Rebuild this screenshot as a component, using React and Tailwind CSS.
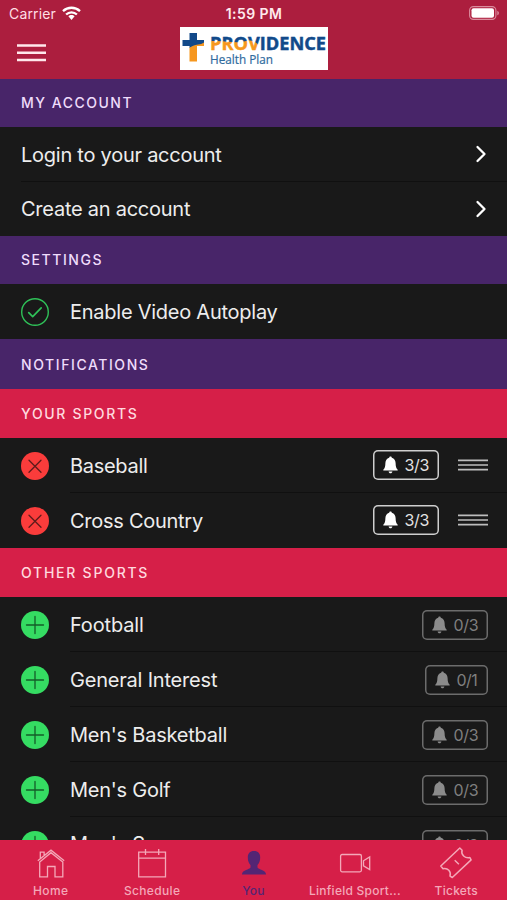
const label = "font-[Inter,sans-serif]";

function Section({ title, tone }) {
  return (
    <div className={`flex shrink-0 items-center pl-[21px] text-[14px] font-medium ${tone}`}>
      <span className="whitespace-nowrap">{title}</span>
    </div>
  );
}

function Chevron() {
  return (
    <svg className="mr-[-1px]" width="14" height="20" viewBox="0 0 14 20" fill="none" stroke="#fff" strokeWidth="2.3" strokeLinecap="round" strokeLinejoin="round">
      <path d="M2.5 3 9.5 10 2.5 17" />
    </svg>
  );
}

function Mark({ kind }) {
  return (
    <svg className="shrink-0" width="28" height="28" viewBox="0 0 28 28" fill="none" strokeLinecap="round" strokeLinejoin="round">
      {kind === "check" && (
        <g stroke="#2fc158" strokeWidth="1.4">
          <circle cx="14" cy="14" r="13.3" />
          <path d="m7.7 14.6 4 4L20.2 9.8" strokeWidth="1.7" />
        </g>
      )}
      {kind === "remove" && (
        <>
          <circle cx="14" cy="14" r="14" fill="#fa3c3b" />
          <path d="m8 8.2 12 12M20 8.2l-12 12" stroke="#5d1b1b" strokeWidth="1.3" />
        </>
      )}
      {kind === "add" && (
        <>
          <circle cx="14" cy="14" r="14" fill="#35dc62" />
          <path d="M14 5.5v17M5.5 14h17" stroke="#145c29" strokeWidth="1.3" />
        </>
      )}
    </svg>
  );
}

function Badge({ count, dim }) {
  const narrow = count === "0/1";
  return (
    <div
      className={`flex h-[30px] shrink-0 items-center rounded-[5px] pl-[9.5px] ${narrow ? "w-[63px]" : "w-[66px]"} ${
        dim ? "mt-px text-[#7f7f7f] shadow-[inset_0_0_0_1.5px_#6c6c6c]" : "mb-px text-[#e2e2e2] shadow-[inset_0_0_0_1.5px_#cfcfcf]"
      }`}
    >
      <svg width="15" height="18" viewBox="0 0 15 18" fill={dim ? "#8b8b8b" : "#fff"}>
        <path d="M7.500.500c.8 0 1.200.500 1.300 1.200C11.300 2.300 12.500 4.400 12.600 7c.1 3.400.400 5.300 2.100 6.700v.9H.3v-.9C2 12.300 2.300 10.400 2.400 7c.1-2.600 1.300-4.700 3.800-5.300C6.300 1 6.700.500 7.500.500ZM5.600 15.400h3.800c-.2 1.100-.9 1.800-1.900 1.800s-1.700-.7-1.900-1.800Z" />
      </svg>
      <span className={`whitespace-nowrap pl-[7px] text-[16px] leading-none ${narrow ? "tracking-[-0.5px]" : "tracking-[-0.35px]"}`}>{count}</span>
    </div>
  );
}

function Row({ mark, text, spacing, children, divider = true, lift = "pt-[2px]" }) {
  return (
    <div className="flex h-[55px] shrink-0 pl-[21px]">
      {mark && (
        <div className="flex w-[49px] shrink-0 items-center">
          <Mark kind={mark} />
        </div>
      )}
      <div className={`flex flex-1 items-center border-b pr-[19px] ${divider ? "border-[#101010]" : "border-transparent"}`}>
        <span className={`flex-1 whitespace-nowrap text-[20px] leading-none text-[#ededed] ${lift} ${spacing}`}>{text}</span>
        {children}
      </div>
    </div>
  );
}

function Handle() {
  return (
    <svg className="ml-[19px]" width="30" height="14" viewBox="0 0 30 14" stroke="#bdbdbd" strokeWidth="1.700">
      <path d="M0 2.400h30M0 7h30M0 11.600h30" />
    </svg>
  );
}

function Logo() {
  return (
    <svg width="148" height="43" viewBox="180 27 148 43">
      <defs>
        <pattern id="wave" patternUnits="userSpaceOnUse" x="180" y="27" width="148" height="43">
          <rect width="148" height="43" fill="#124989" />
          <path d="M0 14.300H30C46 13 54 17 64 14.500 71 12 76 14 79 19L77 25V43H0Z" fill="#f6971f" />
        </pattern>
      </defs>
      <rect x="180" y="27" width="148" height="43" fill="#fff" />
      <path d="M189.500 33h7.500v7h7v3c-2 2-5 3-8 3l-6.500 2v-2h-7v-6h7Z" fill="#124989" />
      <path d="M189.500 48c2-2 5-3 8.500-3.500 3-.4 5-1.200 6-2v3.500h-7v15.500h-7.500Z" fill="#f6971f" />
      <text x="210" y="50.300" fontFamily="Open Sans" fontWeight="700" fontSize="17" textLength="116" lengthAdjust="spacingAndGlyphs" fill="url(#wave)" stroke="url(#wave)" strokeWidth=".4">PROVIDENCE</text>
      <text x="210" y="64.200" fontFamily="Open Sans" fontSize="12.500" textLength="63" lengthAdjust="spacingAndGlyphs" fill="#306b9e" stroke="#306b9e" strokeWidth=".2">Health Plan</text>
    </svg>
  );
}

function Tab({ text, spacing, active, children }) {
  return (
    <div className={`flex flex-1 flex-col items-center pt-[6px] ${active ? "text-[#542574]" : "text-[#f4a8b8]"}`}>
      <svg width="36" height="34" viewBox="0 0 36 34" fill="none" stroke="currentColor" strokeWidth="1.300" strokeLinejoin="miter">
        {children}
      </svg>
      <span className={`mt-[4px] whitespace-nowrap text-[12px] font-medium leading-[14px] ${spacing}`}>{text}</span>
    </div>
  );
}

export default function App() {
  return (
    <div className={`flex h-[900px] w-[507px] flex-col overflow-hidden bg-[#191919] ${label}`}>
      <header className="flex h-[79px] shrink-0 flex-col bg-[#ac1e3e]">
        <div className="grid h-[27px] shrink-0 grid-cols-3 items-center px-[9px] text-white">
          <div className="flex items-center gap-[6px] text-[#ffdfe4]">
            <span className="text-[14px] leading-none tracking-[0.15px]">Carrier</span>
            <svg className="mb-px" width="19" height="15" viewBox="0 0 19 15" fill="none" stroke="#fff" strokeWidth="2.300">
              <path d="M1 5.200c4.800-4.600 12.200-4.600 17 0M4.100 8.500c3-2.900 7.800-2.900 10.800 0" />
              <path d="M9.500 9c1.200 0 2.300.5 3.100 1.300L9.500 14l-3.100-3.700C7.200 9.500 8.300 9 9.500 9Z" fill="#fff" stroke="none" />
            </svg>
          </div>
          <span className="pl-px text-center text-[14px] font-semibold leading-none tracking-[0.4px] text-[#ffeaed]">1:59 PM</span>
          <svg className="mb-px mr-[-2px] justify-self-end" width="31" height="14" viewBox="0 0 31 14">
            <rect x=".6" y=".6" width="26.300" height="12.800" rx="3.800" fill="none" stroke="#da8c9d" strokeWidth="1.100" />
            <rect x="2.500" y="2.300" width="22.500" height="9.400" rx="2" fill="#fff" />
            <path d="M28.300 4.700v4.600c1-.4 1.600-1.300 1.600-2.300s-.6-1.900-1.600-2.300Z" fill="#da8c9d" />
          </svg>
        </div>
        <div className="grid grid-cols-[180px_148px_1fr]">
          <svg className="ml-[16.500px] mt-[16px]" width="29" height="20" viewBox="0 0 29 20" stroke="#ffe8eb" strokeWidth="2.400">
            <path d="M0 2.500h29M0 9.700h29M0 17h29" />
          </svg>
          <Logo />
        </div>
      </header>

      <main className="flex min-h-0 flex-1 flex-col overflow-hidden">
        <Section title="MY ACCOUNT" tone="h-[48px] pb-px tracking-[1.500px] bg-[#482569] text-[#efdcfb]" />
        <Row text="Login to your account" spacing="tracking-[-0.250px]"><Chevron /></Row>
        <Row text="Create an account" spacing="tracking-[-0.250px]" lift="" divider={false}><Chevron /></Row>
        <Section title="SETTINGS" tone="-mt-px h-[48px] pb-px tracking-[1.550px] bg-[#482569] text-[#efdcfb]" />
        <Row mark="check" text="Enable Video Autoplay" spacing="tracking-[-0.250px]" divider={false} />
        <Section title="NOTIFICATIONS" tone="h-[50px] tracking-[1.580px] bg-[#482569] text-[#efdcfb]" />
        <Section title="YOUR SPORTS" tone="h-[49px] tracking-[1.670px] bg-[#d61f48] text-[#ffd9df]" />
        <Row mark="remove" text="Baseball" spacing="tracking-[-0.300px]"><Badge count="3/3" /><Handle /></Row>
        <Row mark="remove" text="Cross Country" spacing="tracking-[-0.270px]" divider={false}><Badge count="3/3" /><Handle /></Row>
        <Section title="OTHER SPORTS" tone="h-[49px] tracking-[1.750px] bg-[#d61f48] text-[#ffd9df]" />
        <Row mark="add" text="Football" spacing="tracking-[-0.150px]"><Badge count="0/3" dim /></Row>
        <Row mark="add" text="General Interest" spacing="tracking-[-0.200px]"><Badge count="0/1" dim /></Row>
        <Row mark="add" text="Men's Basketball" spacing="tracking-[-0.230px]"><Badge count="0/3" dim /></Row>
        <Row mark="add" text="Men's Golf" spacing="tracking-[-0.250px]"><Badge count="0/3" dim /></Row>
        <Row mark="add" text="Men's Soccer" spacing="tracking-[-0.250px]" lift=""><Badge count="0/3" dim /></Row>
      </main>

      <nav className="flex h-[60px] shrink-0 bg-[#d61f48]">
        <Tab text="Home" spacing="tracking-[0.4px]">
          <path d="M4.800 14.800 18 4.200l13.200 10.600M6.700 16v14.800h7.800V20.500h7.500v10.300h7.800V16L18 6.700ZM7.300 12.500V6.200h3.800v3.500" />
        </Tab>
        <Tab text="Schedule" spacing="tracking-[0.350px]">
          <path d="M4.700 6.200h26.800v24.600H4.700ZM4.700 12.200h26.800M11.500 3v6M24.700 3v6" />
        </Tab>
        <Tab text="You" spacing="tracking-[0.2px]" active>
          <path d="M18 5c4.200 0 6.200 2.500 6.200 6.500 0 3.500-1.200 5.900-2.700 7.500v2.500c1 2.400 8 1.800 8.600 7H5.900c.6-5.200 7.600-4.600 8.600-7V19c-1.500-1.600-2.700-4-2.700-7.500C11.800 7.500 13.800 5 18 5Z" fill="currentColor" stroke="none" />
        </Tab>
        <Tab text="Linfield Sport..." spacing="tracking-[0.250px]">
          <rect x="3.600" y="8.500" width="20.800" height="17.300" rx="1.500" />
          <path d="M26.500 14.800 32.700 11v12.500l-6.200-3.700Z" />
        </Tab>
        <Tab text="Tickets" spacing="tracking-[0.250px]">
          <path d="M2.800 20 21.800 2l2.300 2.200c-1.500 4.500 3 8.400 7.800 7.300l1.200 2.400L14.300 31.500l-2.300-1.400c1.500-4.500-2.300-8.600-7-7.400ZM16.700 14.200l4.200 4" strokeWidth="1.500" strokeLinejoin="round" />
        </Tab>
      </nav>
    </div>
  );
}
